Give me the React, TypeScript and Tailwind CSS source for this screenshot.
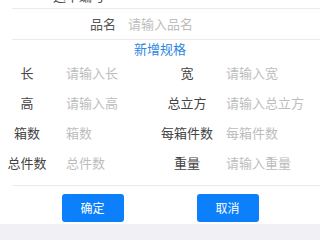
const specs: [string, string][] = [
  ["长", "请输入长"],
  ["宽", "请输入宽"],
  ["高", "请输入高"],
  ["总立方", "请输入总立方"],
  ["箱数", "箱数"],
  ["每箱件数", "每箱件数"],
  ["总件数", "总件数"],
  ["重量", "请输入重量"],
];

export default function App() {
  return (
    <div
      className="w-[320px] h-[240px] overflow-hidden bg-white text-[13px]"
      style={{ fontFamily: '"Noto Sans CJK SC", "Noto Sans", sans-serif' }}
    >
      {/* row scrolled off the top */}
      <div className="ml-[12px] h-[9px] overflow-hidden border-b border-[#ebebeb]">
        <div className="-mt-[14px] flex h-[20px] items-center pl-[41px] text-[#444]">
          运单编号
        </div>
      </div>

      <div className="ml-[12px] flex h-[31px] items-center border-b border-[#ebebeb]">
        <span className="w-[104px] text-right text-[#555]">品名</span>
        <span className="ml-[12px] text-[#bdbdbd]">请输入品名</span>
      </div>

      <div className="flex h-[18px] items-center justify-center text-[#2d86e0]">
        新增规格
      </div>

      <div className="ml-[12px] border-b border-[#ebebeb] pb-[7px]">
        <div className="-ml-[12px] grid grid-cols-2">
          {specs.map(([label, ph]) => (
            <div key={label} className="flex h-[30px] items-center">
              <span className="w-[54px] text-center text-[#444]">{label}</span>
              <span className="ml-[12px] text-[#bdbdbd]">{ph}</span>
            </div>
          ))}
        </div>
      </div>

      <div className="flex h-[38px] justify-center gap-[73px] pt-[8px]">
        <button className="h-[28px] w-[62px] rounded-[3px] bg-[#0c7ffb] text-[12px] text-white">
          确定
        </button>
        <button className="h-[28px] w-[62px] rounded-[3px] bg-[#0c7ffb] text-[12px] text-white">
          取消
        </button>
      </div>

      <div className="h-[20px] bg-[#f1f1f5]" />
    </div>
  );
}
